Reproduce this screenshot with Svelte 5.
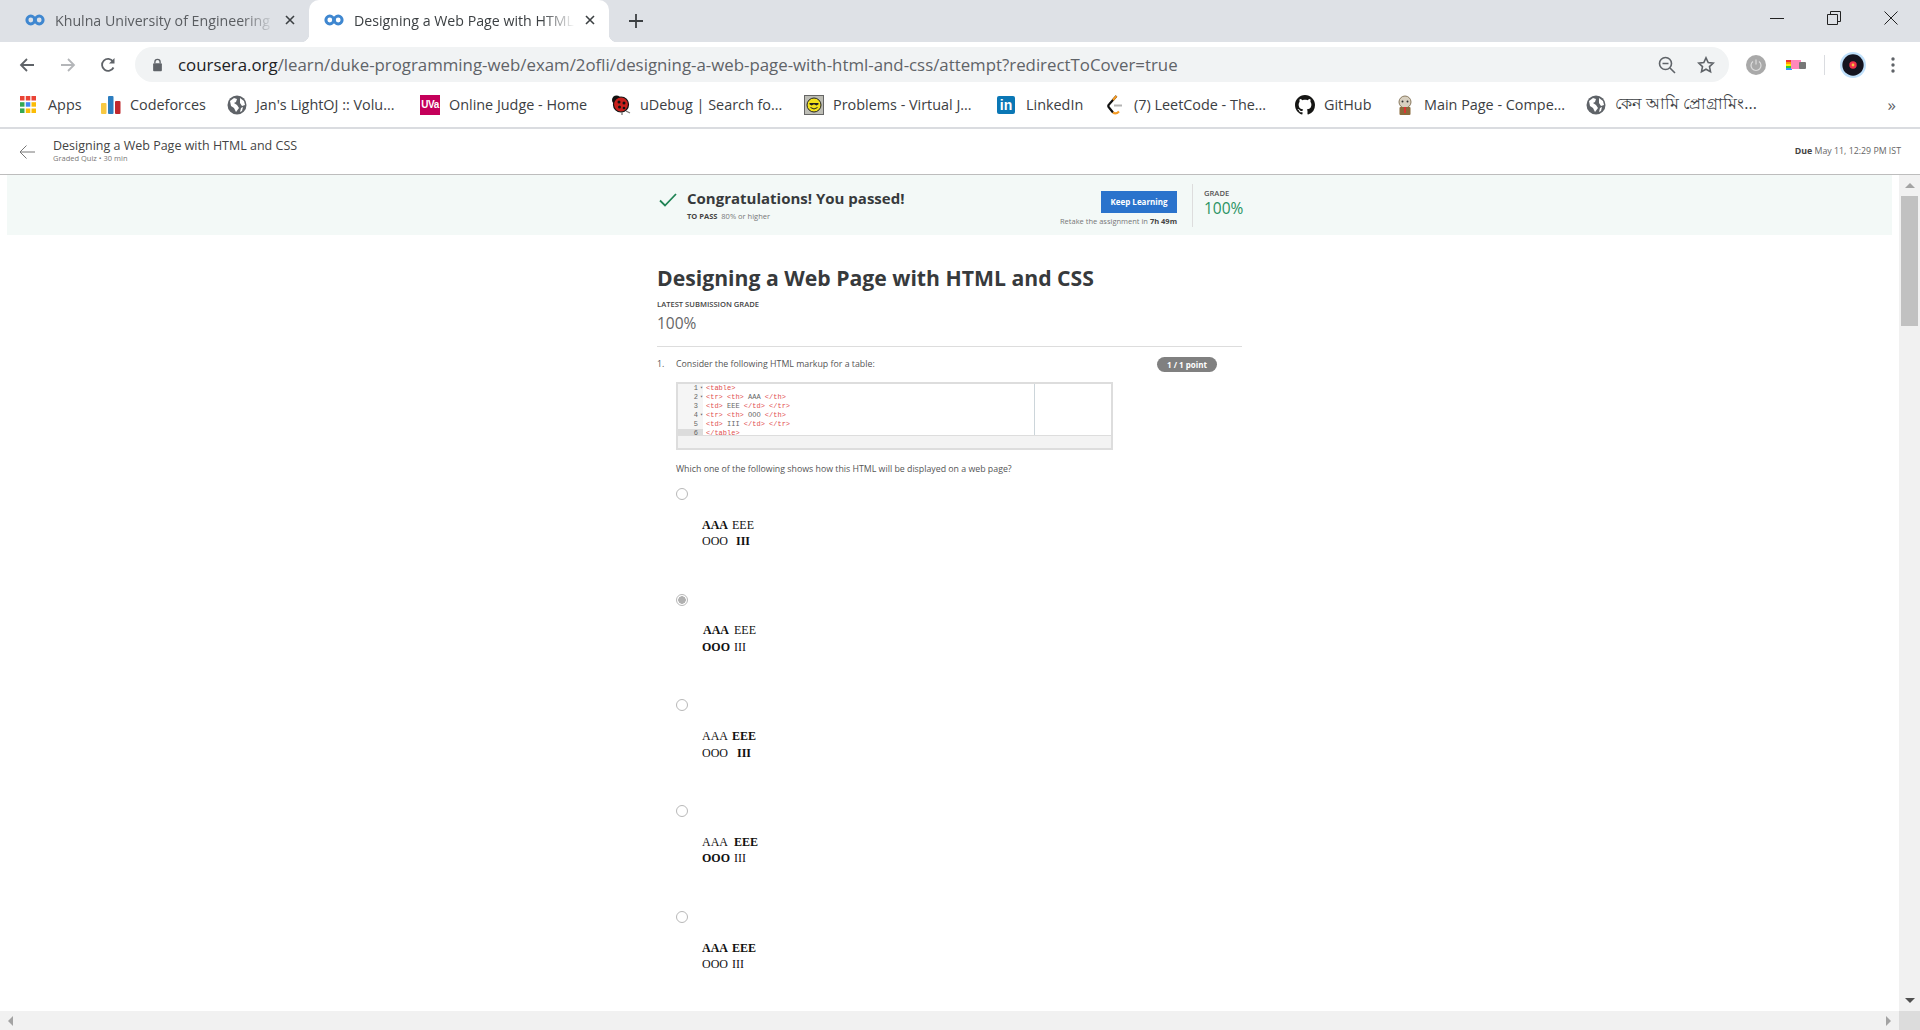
<script>
    const tableRows = [
        { parts: [{ tag: "<tr>", k: 1 }, { tag: " <th>", k: 1 }, { tag: " AAA " }, { tag: "</th>", k: 1 }], fold: true },
        { parts: [{ tag: "<td>", k: 1 }, { tag: " EEE " }, { tag: "</td>", k: 1 }, { tag: " </tr>", k: 1 }] },
        { parts: [{ tag: "<tr>", k: 1 }, { tag: " <th>", k: 1 }, { tag: " OOO " }, { tag: "</th>", k: 1 }], fold: true },
        { parts: [{ tag: "<td>", k: 1 }, { tag: " III " }, { tag: "</td>", k: 1 }, { tag: " </tr>", k: 1 }] },
    ];

    const codeLines = [
        { parts: [{ tag: "<table>", k: 1 }], fold: true },
        ...tableRows,
        { parts: [{ tag: "</table>", k: 1 }], active: true },
    ];

    // second value = bold cell
    const options = [
        { rows: [[["AAA", 1], ["EEE", 0]], [["OOO", 0], ["III", 1]]] },
        { rows: [[["AAA", 1], ["EEE", 0]], [["OOO", 1], ["III", 0]]], checked: true },
        { rows: [[["AAA", 0], ["EEE", 1]], [["OOO", 0], ["III", 1]]] },
        { rows: [[["AAA", 0], ["EEE", 1]], [["OOO", 1], ["III", 0]]] },
        { rows: [[["AAA", 1], ["EEE", 1]], [["OOO", 0], ["III", 0]]] },
    ];
</script>

{#snippet logo()}
    <svg class="fav" viewBox="0 0 20 12"><circle cx="5.800" cy="6" r="3.900" fill="none" stroke="#3f87d0" stroke-width="3"/><circle cx="14.200" cy="6" r="3.900" fill="none" stroke="#3f87d0" stroke-width="3"/></svg>
{/snippet}

{#snippet globe()}
    <svg class="bm-icon" viewBox="0 0 20 20"><circle cx="10" cy="10" r="9.500" fill="#5f6368"/><path d="M3 6l4-3 3 1-1 3-2 1 3 2 2 3-3 4-2-4-3-2zM13 3l4 3 1 4-3 1-2-3zM14 13l2-1-1 4-2 1z" fill="#fff"/></svg>
{/snippet}

<div class="browser">
    <div class="tabstrip">
        <div class="tab">
            {@render logo()}
            <span class="tab-title">Khulna University of Engineering</span>
            <svg class="tab-x" viewBox="0 0 10 10"><path d="M1 1l8 8M9 1l-8 8" stroke="#3c4043" stroke-width="1.600"/></svg>
        </div>
        <div class="tab active">
            {@render logo()}
            <span class="tab-title">Designing a Web Page with HTML and CSS</span>
            <svg class="tab-x" viewBox="0 0 10 10"><path d="M1 1l8 8M9 1l-8 8" stroke="#3c4043" stroke-width="1.600"/></svg>
        </div>
        <svg class="new-tab" viewBox="0 0 14 14"><path d="M7 0v14M0 7h14" stroke="#3c4043" stroke-width="1.800"/></svg>
        <div class="win-btns">
            <svg viewBox="0 0 14 14"><path d="M0 7.500h14" stroke="#222" stroke-width="1"/></svg>
            <svg viewBox="0 0 14 14"><path d="M.5 3.500h10v10H.5zM3.500 3.500v-3h10v10h-3" fill="none" stroke="#222" stroke-width="1"/></svg>
            <svg viewBox="0 0 14 14"><path d="M.5.5l13 13M13.500.5l-13 13" stroke="#222" stroke-width="1"/></svg>
        </div>
    </div>

    <div class="toolbar">
        <svg class="nav" viewBox="0 0 16 16"><path d="M15 8H2M8 2L2 8l6 6" fill="none" stroke="#5f6368" stroke-width="1.800"/></svg>
        <svg class="nav" viewBox="0 0 16 16"><path d="M1 8h13M8 2l6 6-6 6" fill="none" stroke="#b4b6b9" stroke-width="1.800"/></svg>
        <svg class="nav reload" viewBox="0 0 16 16"><path d="M13.500 10.500A6 6 0 1 1 13 4.500" fill="none" stroke="#5f6368" stroke-width="1.800"/><path d="M14.500 1v5.500H9z" fill="#5f6368"/></svg>
        <div class="omnibox">
            <svg class="lock" viewBox="0 0 12 16"><path d="M3 6V4.500a3 3 0 0 1 6 0V6" fill="none" stroke="#5f6368" stroke-width="1.500"/><rect x="1" y="6" width="10" height="9" rx="1" fill="#5f6368"/></svg>
            <span class="url"><span class="host">coursera.org</span>/learn/duke-programming-web/exam/2ofli/designing-a-web-page-with-html-and-css/attempt?redirectToCover=true</span>
            <svg class="zoom-ic" viewBox="0 0 18 18"><circle cx="7.500" cy="7.500" r="6" fill="none" stroke="#5f6368" stroke-width="1.600"/><path d="M4.500 7.500h6M12 12l5 5" stroke="#5f6368" stroke-width="1.600"/></svg>
            <svg class="star" viewBox="0 0 18 18"><path d="M9 1.800l2.200 4.700 5.100.6-3.800 3.500 1 5.100L9 13.200l-4.500 2.500 1-5.100L1.700 7.100l5.100-.6z" fill="none" stroke="#5f6368" stroke-width="1.600"/></svg>
        </div>
        <svg class="ext power" viewBox="0 0 20 20"><circle cx="10" cy="10" r="10" fill="#a9a9a9"/><path d="M7 6.500a5 5 0 1 0 6 0M10 4.500v5" fill="none" stroke="#ddd" stroke-width="1.200"/></svg>
        <svg class="ext nyan" viewBox="0 0 20 12">
            <rect x="0" y="1" width="6" height="2" fill="#e33"/><rect x="0" y="3" width="6" height="2" fill="#f90"/><rect x="0" y="5" width="6" height="2" fill="#fe0"/><rect x="0" y="7" width="6" height="2" fill="#3c3"/><rect x="0" y="9" width="6" height="2" fill="#39f"/>
            <rect x="5" y="1" width="10" height="9" fill="#f8b"/><rect x="13" y="3" width="7" height="7" rx="1" fill="#777"/>
        </svg>
        <span class="divider"></span>
        <svg class="ext avatar" viewBox="0 0 28 28"><circle cx="14" cy="14" r="14" fill="#bfe0fb"/><circle cx="14" cy="14" r="11.500" fill="#141420"/><circle cx="14" cy="14" r="4" fill="#f0304c"/><circle cx="14" cy="14" r="1.500" fill="#f8c040"/></svg>
        <svg class="ext dots" viewBox="0 0 4 16"><circle cx="2" cy="2" r="1.700" fill="#5f6368"/><circle cx="2" cy="8" r="1.700" fill="#5f6368"/><circle cx="2" cy="14" r="1.700" fill="#5f6368"/></svg>
    </div>

    <div class="bookmarks">
        <div class="bm">
            <svg class="apps" viewBox="0 0 16 17">
                <path d="M0 0h4.500v4.500H0zM5.800 0h4.500v4.500H5.800zM11.500 0H16v4.500h-4.500z" fill="#ea4335"/>
                <path d="M0 6.200h4.500v4.500H0z" fill="#34a853"/><path d="M5.800 6.200h4.500v4.500H5.800z" fill="#4285f4"/><path d="M11.500 6.200H16v4.500h-4.500z" fill="#fbbc05"/>
                <path d="M0 12.400h4.500V17H0z" fill="#34a853"/><path d="M5.800 12.400h4.500V17H5.800zM11.500 12.400H16V17h-4.500z" fill="#fbbc05"/>
            </svg>
            <span>Apps</span>
        </div>
        <div class="bm">
            <svg class="bm-icon" viewBox="0 0 20 18"><rect x="0" y="7" width="5.500" height="11" rx="1" fill="#f7c842"/><rect x="7" y="0" width="5.500" height="18" rx="1" fill="#2b7dc0"/><rect x="14" y="5" width="5.500" height="13" rx="1" fill="#c0282d"/></svg>
            <span>Codeforces</span>
        </div>
        <div class="bm">{@render globe()}<span>Jan's LightOJ :: Volu...</span></div>
        <div class="bm"><span class="uva">UVa</span><span>Online Judge - Home</span></div>
        <div class="bm">
            <svg class="bm-icon" viewBox="0 0 20 20"><circle cx="5.500" cy="5" r="4.500" fill="#111"/><circle cx="10" cy="9.500" r="7.500" fill="#c9201c" stroke="#111" stroke-width="1.200"/><circle cx="8" cy="7" r="1.500" fill="#111"/><circle cx="13" cy="8" r="1.500" fill="#111"/><circle cx="8.500" cy="12" r="1.500" fill="#111"/><circle cx="13" cy="13" r="1.300" fill="#111"/><path d="M15 16l4 2M11 17l0 3" stroke="#777" stroke-width="1.300"/></svg>
            <span>uDebug | Search fo...</span>
        </div>
        <div class="bm">
            <svg class="bm-icon" viewBox="0 0 20 20"><rect x=".5" y=".5" width="19" height="19" fill="#bdbdb5" stroke="#666"/><circle cx="10" cy="10" r="7" fill="#f3e21c" stroke="#222"/><path d="M5.500 8h9v1.200l-2 1.300-2.500-1.300-2.500 1.300-2-1.300z" fill="#222"/><path d="M6.500 12.500q3.500 3 7 0" fill="none" stroke="#222"/></svg>
            <span>Problems - Virtual J...</span>
        </div>
        <div class="bm"><span class="li">in</span><span>LinkedIn</span></div>
        <div class="bm">
            <svg class="bm-icon" viewBox="0 0 16 20"><path d="M9.500 1L2 9.500c-1 1-1 2 0 3l4 5" fill="none" stroke="#111" stroke-width="2.200"/><path d="M6 17.500c2 1.500 4 1 6-1" fill="none" stroke="#f59a23" stroke-width="2.200"/><path d="M9.500 1L6 5" stroke="#f59a23" stroke-width="2"/><path d="M7 10.500h8" stroke="#b3b3b3" stroke-width="2"/></svg>
            <span>(7) LeetCode - The...</span>
        </div>
        <div class="bm">
            <svg class="bm-icon" viewBox="0 0 16 16"><path fill="#161614" d="M8 0C3.580 0 0 3.580 0 8c0 3.540 2.290 6.530 5.470 7.590.4.070.55-.17.55-.38 0-.19-.01-.82-.01-1.490-2.010.37-2.530-.49-2.690-.94-.09-.23-.48-.94-.82-1.130-.28-.15-.68-.52-.01-.53.630-.01 1.080.58 1.230.82.720 1.210 1.870.87 2.330.66.070-.52.280-.87.510-1.070-1.780-.2-3.640-.89-3.640-3.950 0-.87.310-1.590.820-2.150-.08-.2-.36-1.020.08-2.120 0 0 .67-.21 2.200.82.640-.18 1.320-.27 2-.27s1.360.09 2 .27c1.530-1.040 2.200-.82 2.200-.82.440 1.100.16 1.920.08 2.120.51.560.82 1.270.82 2.150 0 3.070-1.870 3.750-3.650 3.950.29.250.54.730.54 1.480 0 1.070-.01 1.930-.01 2.200 0 .21.150.46.550.38A8.010 8.010 0 0 0 16 8c0-4.420-3.580-8-8-8z"/></svg>
            <span>GitHub</span>
        </div>
        <div class="bm">
            <svg class="bm-icon" viewBox="0 0 18 20"><circle cx="9" cy="7" r="6" fill="#d8d0c0" stroke="#8a7a60"/><circle cx="6.500" cy="6.500" r="1" fill="#333"/><circle cx="11.500" cy="6.500" r="1" fill="#333"/><rect x="3.500" y="12" width="11" height="8" rx="1" fill="#8a6a3c"/><rect x="8" y="12" width="2" height="6" fill="#d33"/></svg>
            <span>Main Page - Compe...</span>
        </div>
        <div class="bm bn">{@render globe()}<span>কেন আমি প্রোগ্রামিং...</span></div>
        <span class="more">»</span>
    </div>

    <div class="quiz-bar">
        <svg class="quiz-back" viewBox="0 0 16 14"><path d="M16 7H1M7.500.5L1 7l6.500 6.500" fill="none" stroke="#777" stroke-width="1"/></svg>
        <div class="quiz-name">
            <div class="quiz-title">Designing a Web Page with HTML and CSS</div>
            <div class="quiz-sub">Graded Quiz • 30 min</div>
        </div>
        <div class="due"><b>Due</b> May 11, 12:29 PM IST</div>
    </div>

    <div class="viewport">
        <div class="page">
            <div class="banner">
                <div class="banner-in">
                    <svg class="check" viewBox="0 0 18 14"><path d="M1 7.500l5 5L17 1" fill="none" stroke="#1f8354" stroke-width="1.800"/></svg>
                    <div class="passed">
                        <div class="congrats">Congratulations! You passed!</div>
                        <div class="to-pass"><b>TO PASS</b>&nbsp; 80% or higher</div>
                    </div>
                    <div class="keep">
                        <button class="keep-btn">Keep Learning</button>
                        <div class="retake">Retake the assignment in <b>7h 49m</b></div>
                    </div>
                    <div class="grade">
                        <div class="grade-label">GRADE</div>
                        <div class="grade-val">100%</div>
                    </div>
                </div>
            </div>

            <div class="content">
                <h1>Designing a Web Page with HTML and CSS</h1>
                <div class="latest">LATEST SUBMISSION GRADE</div>
                <div class="latest-val">100%</div>
                <hr />

                <div class="question">
                    <span class="q-num">1.</span>
                    <div class="q-body">
                        <div class="q-head">
                            <p>Consider the following HTML markup for a table:</p>
                            <span class="badge">1 / 1 point</span>
                        </div>

                        <div class="code-box">
                            <div class="editor">
                                <div class="code">
                                    {#each codeLines as line, i}
                                        <div class="line">
                                            <span class="gutter" class:on={line.active}>{i + 1}<i>{line.fold ? "▾" : ""}</i></span>
                                            <span class="src">{#each line.parts as p}<span class:tag={p.k}>{p.tag}</span>{/each}</span>
                                        </div>
                                    {/each}
                                </div>
                                <div class="preview"></div>
                            </div>
                            <div class="code-foot"></div>
                        </div>

                        <p class="which">Which one of the following shows how this HTML will be displayed on a web page?</p>

                        {#each options as opt}
                            <div class="option">
                                <span class="radio" class:checked={opt.checked}></span>
                                <table>
                                    <tbody>
                                        {#each opt.rows as row}
                                            <tr>
                                                {#each row as cell}
                                                    {#if cell[1]}<th>{cell[0]}</th>{:else}<td>{cell[0]}</td>{/if}
                                                {/each}
                                            </tr>
                                        {/each}
                                    </tbody>
                                </table>
                            </div>
                        {/each}
                    </div>
                </div>
            </div>
        </div>

        <div class="vscroll">
            <span class="arrow-up"></span>
            <div class="track"><div class="thumb"></div></div>
            <span class="arrow-down"></span>
        </div>
    </div>

    <div class="hscroll">
        <span class="arrow-left"></span>
        <span class="arrow-right"></span>
        <span class="corner"></span>
    </div>
</div>

<style>
    :global(body) {
        margin: 0;
        background: #fff;
    }

    .browser {
        width: 1920px;
        height: 1030px;
        display: flex;
        flex-direction: column;
        overflow: hidden;
        font-family: "Open Sans", "Noto Sans", sans-serif;
        color: #333;
    }

    /* tabs */
    .tabstrip {
        height: 42px;
        flex: none;
        background: #dee1e6;
        display: flex;
        align-items: stretch;
        padding-left: 9px;
    }

    .tab {
        width: 300px;
        box-sizing: border-box;
        display: flex;
        align-items: center;
        padding: 0 14px 2px 16px;
        position: relative;
        font-size: 14.200px;
        color: #5a5d61;
    }

    .tab.active {
        background: #fff;
        border-radius: 10px 10px 0 0;
        color: #3c4043;
        padding-left: 15px;
    }

    .tab.active::before,
    .tab.active::after {
        content: "";
        position: absolute;
        bottom: 0;
        width: 8px;
        height: 8px;
    }

    .tab.active::before {
        left: -8px;
        background: radial-gradient(circle at 0 0, transparent 8px, #fff 8.500px);
    }

    .tab.active::after {
        right: -8px;
        background: radial-gradient(circle at 100% 0, transparent 8px, #fff 8.500px);
    }

    .fav {
        width: 20px;
        height: 12px;
        flex: none;
    }

    .tab-title {
        flex: 1;
        margin-left: 10px;
        white-space: nowrap;
        overflow: hidden;
        -webkit-mask-image: linear-gradient(to right, #000 85%, transparent 100%);
        mask-image: linear-gradient(to right, #000 85%, transparent 100%);
    }

    .tab-x {
        width: 10px;
        height: 10px;
        margin-left: 10px;
        flex: none;
    }

    .new-tab {
        width: 14px;
        height: 14px;
        align-self: center;
        margin-left: 20px;
    }

    .win-btns {
        margin-left: auto;
        display: flex;
        align-items: center;
        gap: 43px;
        padding: 0 22px 6px 0;
    }

    .win-btns svg {
        width: 14px;
        height: 14px;
    }

    /* toolbar */
    .toolbar {
        height: 40px;
        flex: none;
        background: #fff;
        display: flex;
        align-items: flex-end;
        padding-left: 19px;
        box-sizing: border-box;
    }

    .toolbar .nav {
        width: 16px;
        height: 16px;
        margin: 0 25px 9px 0;
    }

    .toolbar .reload {
        margin-left: -1px;
        margin-right: 19px;
    }

    .omnibox {
        width: 1594px;
        height: 35px;
        box-sizing: border-box;
        background: #f1f3f4;
        border-radius: 18px;
        display: flex;
        align-items: center;
        padding: 0 14px 0 17px;
    }

    .lock {
        width: 11px;
        height: 14px;
        flex: none;
    }

    .url {
        margin-left: 15px;
        font-size: 16.830px;
        color: #5f6368;
        white-space: nowrap;
    }

    .host {
        color: #202124;
    }

    .zoom-ic {
        width: 18px;
        height: 18px;
        margin-left: auto;
    }

    .star {
        width: 18px;
        height: 18px;
        margin-left: 21px;
    }

    .ext {
        flex: none;
        margin-bottom: 7px;
    }

    .power {
        width: 20px;
        height: 20px;
        margin-left: 17px;
    }

    .nyan {
        width: 20px;
        height: 12px;
        margin: 0 0 11px 20px;
    }

    .divider {
        width: 1px;
        height: 20px;
        background: #dadce0;
        margin: 0 15px 7px 18px;
    }

    .avatar {
        width: 26px;
        height: 26px;
        margin-bottom: 4px;
    }

    .dots {
        width: 4px;
        height: 16px;
        margin: 0 0 9px 25px;
    }

    /* bookmarks */
    .bookmarks {
        height: 47px;
        flex: none;
        box-sizing: border-box;
        border-bottom: 2px solid #dadce0;
        display: flex;
        align-items: center;
        padding-left: 20px;
        font-size: 14.400px;
        color: #3c4043;
        white-space: nowrap;
    }

    .bm {
        display: flex;
        align-items: center;
        gap: 9px;
        flex: none;
    }

    /* chrome sizes each bookmark button on its own */
    .bm:nth-child(1) { width: 81px; }
    .bm:nth-child(2) { width: 126px; }
    .bm:nth-child(3) { width: 193px; }
    .bm:nth-child(4) { width: 191px; }
    .bm:nth-child(5) { width: 193px; }
    .bm:nth-child(6) { width: 193px; }
    .bm:nth-child(7) { width: 108px; }
    .bm:nth-child(8) { width: 190px; }
    .bm:nth-child(9) { width: 100px; }
    .bm:nth-child(10) { width: 191px; }

    .bm-icon {
        width: 20px;
        height: 20px;
        flex: none;
    }

    .apps {
        width: 16px;
        height: 17px;
        margin-right: 3px;
        flex: none;
    }

    .bn {
        font-size: 16px;
    }

    .uva {
        width: 20px;
        height: 20px;
        background: #c4005a;
        color: #fff;
        font: bold 10px/20px "Liberation Sans", sans-serif;
        text-align: center;
        letter-spacing: -0.500px;
    }

    .li {
        width: 18px;
        height: 18px;
        margin-right: 2px;
        border-radius: 2px;
        background: #0a77b5;
        color: #fff;
        font: bold 14px/18px "Liberation Sans", sans-serif;
        text-align: center;
    }

    .more {
        margin-left: auto;
        padding-right: 24px;
        font-size: 17px;
        color: #5f6368;
        line-height: 1;
    }

    /* quiz header */
    .quiz-bar {
        height: 46px;
        flex: none;
        box-sizing: border-box;
        border-bottom: 1px solid #bdbdbd;
        display: flex;
        align-items: center;
        padding: 0 19px 2px;
    }

    .quiz-back {
        width: 16px;
        height: 14px;
        flex: none;
        margin: 2px 18px 0 0;
    }

    .quiz-title {
        font-size: 12.500px;
        line-height: 15px;
        color: #444;
    }

    .quiz-sub {
        font-size: 7.500px;
        line-height: 11px;
        color: #777;
    }

    .due {
        margin-left: auto;
        font-size: 8.800px;
        color: #666;
    }

    .due b {
        color: #444;
    }

    /* page */
    .viewport {
        flex: 1;
        display: flex;
        min-height: 0;
    }

    .page {
        flex: 1;
        overflow: hidden;
    }

    .banner {
        margin: 0 7px;
        height: 60px;
        background: #f3f9f7;
        display: flex;
        justify-content: center;
    }

    .banner-in {
        width: 585px;
        padding-left: 2px;
        box-sizing: border-box;
        display: flex;
        align-items: center;
    }

    .check {
        width: 18px;
        height: 14px;
        flex: none;
        margin: -11px 10px 0 0;
    }

    .passed {
        flex: 1;
    }

    .congrats {
        font-size: 15px;
        font-weight: 700;
        line-height: 20px;
        color: #373a3c;
    }

    .to-pass {
        font-size: 7.500px;
        line-height: 13px;
        margin-top: 2px;
        color: #777;
    }

    .to-pass b {
        color: #444;
    }

    .keep {
        display: flex;
        flex-direction: column;
        align-items: flex-end;
        gap: 3px;
        padding-top: 7px;
    }

    .keep-btn {
        width: 76px;
        height: 22px;
        padding: 0;
        border: 0;
        background: #2a73cc;
        color: #fff;
        font: 700 8px "Open Sans", sans-serif;
    }

    .retake {
        font-size: 7.500px;
        line-height: 11px;
        color: #777;
    }

    .retake b {
        color: #444;
    }

    .grade {
        align-self: center;
        height: 43px;
        box-sizing: border-box;
        margin-left: 15px;
        width: 50px;
        border-left: 1px solid #ddd;
        padding-left: 11px;
    }

    .grade-label {
        font-size: 7.600px;
        font-weight: 600;
        line-height: 12px;
        margin-top: 3px;
        color: #555;
    }

    .grade-val {
        font-size: 15.500px;
        line-height: 18px;
        color: #2a9362;
    }

    .content {
        width: 585px;
        margin: 0 auto;
    }

    h1 {
        margin: 28px 0 0;
        font-size: 21.200px;
        line-height: 30px;
        font-weight: 700;
        color: #373a3c;
    }

    .latest {
        margin-top: 6px;
        font-size: 7.600px;
        font-weight: 600;
        line-height: 11px;
        color: #444;
    }

    .latest-val {
        margin-top: 2px;
        font-size: 15.500px;
        line-height: 22px;
        color: #666;
    }

    hr {
        margin: 12px 0 0;
        border: 0;
        border-top: 1px solid #ddd;
    }

    .question {
        display: flex;
        margin-top: 10px;
        font-size: 8.800px;
        line-height: 14px;
        color: #555;
    }

    .q-num {
        width: 19px;
        flex: none;
    }

    .q-body {
        flex: 1;
    }

    .q-head {
        display: flex;
        justify-content: space-between;
        align-items: flex-start;
        padding-right: 25px;
        height: 25px;
    }

    p {
        margin: 0;
    }

    .badge {
        width: 60px;
        height: 15px;
        border-radius: 8px;
        background: #808080;
        color: #fff;
        font-size: 8px;
        font-weight: 700;
        line-height: 15px;
        text-align: center;
    }

    .code-box {
        width: 437px;
        height: 68px;
        box-sizing: border-box;
        border: 2px solid #ddd;
        display: flex;
        flex-direction: column;
    }

    .editor {
        flex: 1;
        display: flex;
        border-bottom: 1px solid #ddd;
        min-height: 0;
        overflow: hidden;
    }

    .code {
        flex: 1;
        font: 7px/9px "Liberation Mono", monospace;
        color: #666;
    }

    .preview {
        width: 76px;
        border-left: 1px solid #ccd5da;
    }

    .code-foot {
        height: 12px;
        background: #f3f3f3;
    }

    .line {
        display: flex;
        white-space: pre;
    }

    .gutter {
        width: 25px;
        box-sizing: border-box;
        background: #f5f5f5;
        text-align: right;
        padding-right: 5px;
        margin-right: 3px;
        position: relative;
    }

    .gutter i {
        position: absolute;
        right: 0;
        font-style: normal;
        font-size: 5px;
    }

    .gutter.on {
        background: #dcdcdc;
    }

    .tag {
        color: #e2504f;
    }

    .which {
        margin-top: 12px;
    }

    .option {
        height: 105.700px;
        padding-top: 12px;
        box-sizing: border-box;
    }

    .radio {
        display: block;
        width: 12px;
        height: 12px;
        box-sizing: border-box;
        border: 1px solid #b8b8b8;
        border-radius: 50%;
    }

    .radio.checked {
        background: radial-gradient(circle, #b0b0b0 3.500px, #fff 4px);
    }

    table {
        margin: 15.500px 0 0 23px;
        border-collapse: separate;
        border-spacing: 2px;
        font: 12px "Liberation Serif", serif;
        color: #111;
    }

    th,
    td {
        padding: 0 1px;
        height: 14.500px;
        line-height: 14px;
    }

    td {
        font-weight: 400;
    }

    th {
        font-weight: 700;
        text-align: center;
    }

    /* scrollbars */
    .vscroll {
        width: 21px;
        flex: none;
        background: #f1f1f1;
        display: flex;
        flex-direction: column;
        align-items: center;
    }

    .track {
        flex: 1;
        width: 100%;
        padding: 0 2px;
        box-sizing: border-box;
    }

    .thumb {
        height: 130px;
        background: #c1c1c1;
    }

    .arrow-up,
    .arrow-down {
        width: 0;
        height: 0;
        border-left: 5px solid transparent;
        border-right: 5px solid transparent;
    }

    .arrow-up {
        border-bottom: 5px solid #a3a3a3;
        margin: 8px 0;
    }

    .arrow-down {
        border-top: 5px solid #505050;
        margin: 8px 0;
    }

    .hscroll {
        height: 19px;
        flex: none;
        background: #f1f1f1;
        display: flex;
        align-items: center;
        padding-left: 8px;
    }

    .arrow-left,
    .arrow-right {
        width: 0;
        height: 0;
        border-top: 5px solid transparent;
        border-bottom: 5px solid transparent;
    }

    .arrow-left {
        border-right: 5px solid #a3a3a3;
    }

    .arrow-right {
        border-left: 5px solid #a3a3a3;
        margin-left: auto;
        margin-right: 8px;
    }

    .corner {
        width: 21px;
        height: 19px;
        background: #dcdcdc;
    }
</style>
